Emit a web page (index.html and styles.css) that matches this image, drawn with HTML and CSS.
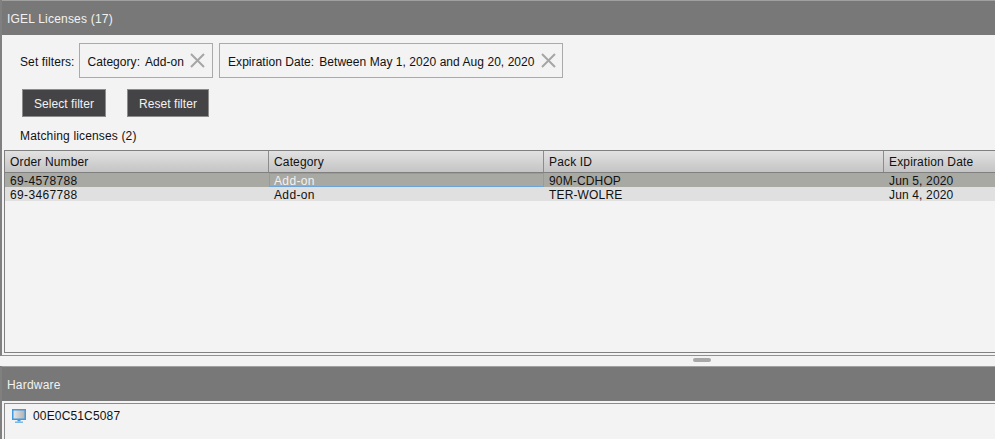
FILE: index.html
```html
<!DOCTYPE html>
<html lang="en">

<head>
    <meta charset="UTF-8">
    <title>IGEL Licenses</title>
    <link rel="stylesheet" href="styles.css">
</head>

<body>
    <div class="panel licenses">
        <div class="title">IGEL Licenses (17)</div>
        <div class="filters">
            <span class="filters-label">Set filters:</span>
            <div class="chip">
                <span>Category:</span><span>Add-on</span>
                <svg class="chip-x" width="15" height="15" viewBox="0 0 15 15">
                    <path d="M1 1 L14 14 M14 1 L1 14" />
                </svg>
            </div>
            <div class="chip chip-date">
                <span>Expiration Date:</span><span>Between May 1, 2020 and Aug 20, 2020</span>
                <svg class="chip-x" width="15" height="15" viewBox="0 0 15 15">
                    <path d="M1 1 L14 14 M14 1 L1 14" />
                </svg>
            </div>
        </div>
        <div class="actions">
            <button class="btn">Select filter</button>
            <button class="btn">Reset filter</button>
        </div>
        <div class="matching">Matching licenses (2)</div>
        <div class="table-box">
            <div class="row head">
                <div class="cell c1">Order Number</div>
                <div class="cell c2">Category</div>
                <div class="cell c3">Pack ID</div>
                <div class="cell c4">Expiration Date</div>
            </div>
            <div class="row selected">
                <div class="cell c1">69-4578788</div>
                <div class="cell c2 focus">Add-on</div>
                <div class="cell c3">90M-CDHOP</div>
                <div class="cell c4">Jun 5, 2020</div>
            </div>
            <div class="row alt">
                <div class="cell c1">69-3467788</div>
                <div class="cell c2">Add-on</div>
                <div class="cell c3">TER-WOLRE</div>
                <div class="cell c4">Jun 4, 2020</div>
            </div>
        </div>
    </div>
    <div class="splitter"><div class="grip"></div></div>
    <div class="panel hardware">
        <div class="title">Hardware</div>
        <div class="tree">
            <svg class="monitor" width="14" height="14" viewBox="0 0 14 14">
                <defs>
                    <linearGradient id="screen" x1="0" y1="0" x2="1" y2="0">
                        <stop offset="0" stop-color="#e8e8e8" />
                        <stop offset="1" stop-color="#b0b0b0" />
                    </linearGradient>
                </defs>
                <rect x="0.75" y="0.75" width="12.5" height="9.5" fill="url(#screen)" stroke="#3f9ae0" stroke-width="1.5" />
                <rect x="5.5" y="11" width="3" height="1.5" fill="#3f9ae0" />
                <rect x="3" y="12.5" width="8" height="1.5" fill="#7db8e4" />
            </svg>
            <span>00E0C51C5087</span>
        </div>
    </div>
</body>

</html>
```

FILE: styles.css
```css
html,
body {
    height: 100%;
}

body {
    margin: 0;
    overflow: hidden;
    background: #f3f3f3;
    color: #111;
    font-family: "Liberation Sans", Arial, sans-serif;
    font-size: 12px;
    letter-spacing: 0.15px;
}

.panel {
    border-left: 2px solid #808080;
}

.licenses {
    height: 356px;
    box-sizing: border-box;
    border-bottom: 1px solid #909090;
}

.title {
    height: 35px;
    box-sizing: border-box;
    padding: 11px 0 0 5px;
    line-height: 14px;
    background: #787878;
    border-top: 1px solid #a0a0a0;
    color: #f2f2f2;
    letter-spacing: 0.2px;
}

.filters {
    display: flex;
    align-items: center;
    gap: 6px;
    margin-top: 8px;
    padding-left: 18px;
    height: 35px;
    letter-spacing: 0.05px;
}

.filters span {
    padding-top: 2px;
}

.filters-label {
    letter-spacing: 0.1px;
    margin-right: -2px;
}

.chip {
    display: flex;
    align-items: center;
    gap: 5px;
    height: 35px;
    box-sizing: border-box;
    padding: 0 7px 0 8px;
    border: 1px solid #aaa;
}

.chip-date {
    padding-right: 6px;
}

.chip-x {
    margin-left: 1px;
    fill: none;
    stroke: #a6a6a6;
    stroke-width: 2;
}

.actions {
    display: flex;
    gap: 21px;
    margin-top: 11px;
    padding-left: 20px;
}

.btn {
    height: 28px;
    padding: 2px 11px 0;
    background: #444446;
    border: 1px solid #8c8c8c;
    color: #f2f2f2;
    font: inherit;
    letter-spacing: 0.05px;
}

.matching {
    margin-top: 12px;
    padding-left: 18px;
    line-height: 14px;
}

.table-box {
    margin: 7px 0 0 2px;
    height: 203px;
    box-sizing: border-box;
    border: 1px solid #808080;
    border-right: 0;
    overflow: hidden;
}

.row {
    display: flex;
    height: 14px;
    line-height: 17px;
}

.cell {
    box-sizing: border-box;
    padding-left: 5px;
    flex: none;
    white-space: nowrap;
}

.c1,
.c2 {
    letter-spacing: 0.35px;
}

.c1 {
    width: 264px;
}

.c2 {
    width: 275px;
}

.c3 {
    width: 340px;
}

.c4 {
    width: 112px;
}

.head {
    height: 22px;
    line-height: 23px;
    background: linear-gradient(#e2e2e2, #c4c4c4);
    border-bottom: 1px solid #808080;
    box-sizing: border-box;
}

.head .cell {
    border-right: 1px solid #8c8c8c;
    height: 21px;
    letter-spacing: 0.15px;
}

.selected {
    background: #a9a9a4;
}

.focus {
    height: 14px;
    color: #f2f2f2;
    border: 1px solid #6fa4d8;
    line-height: 15px;
    padding-left: 4px;
}

.alt {
    background: #e0e0e0;
}

.splitter {
    display: flex;
    justify-content: center;
    height: 10px;
    padding: 2px 0 0 409px;
    box-sizing: border-box;
}

.grip {
    width: 18px;
    height: 4px;
    background: #a8a8a8;
    border-radius: 2px;
}

.hardware {
    height: 73px;
}

.tree {
    display: flex;
    align-items: center;
    gap: 7px;
    height: 36px;
    margin: 2px 0 0 2px;
    padding: 0 0 12px 7px;
    box-sizing: border-box;
    border: 1px solid #8c8c8c;
    border-width: 1px 0 0 1px;
}

.monitor {
    flex: none;
}
```
